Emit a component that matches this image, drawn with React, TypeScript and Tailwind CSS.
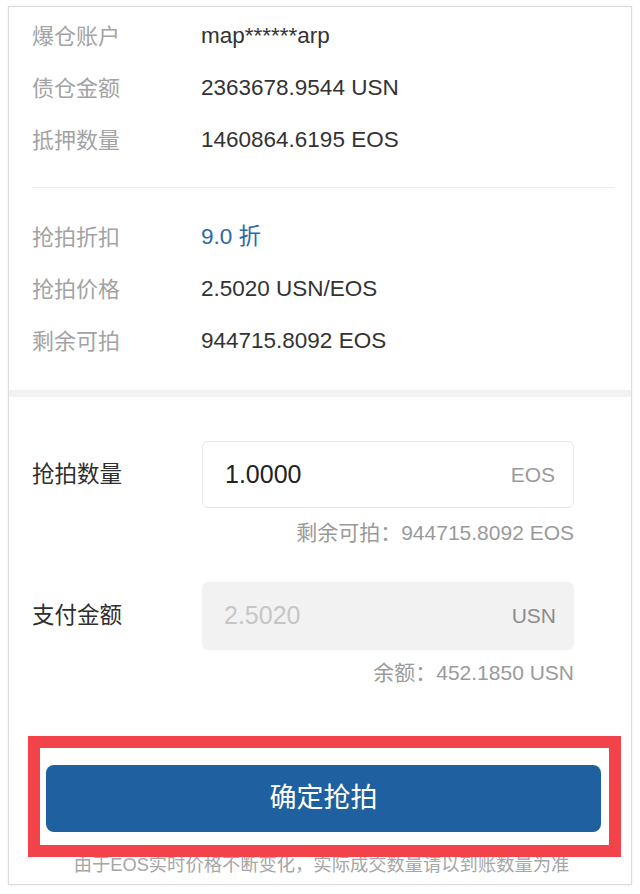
import React from "react";

const font = { fontFamily: '"Liberation Sans", "Noto Sans CJK SC", sans-serif' };

function InfoRow({ label, value, valueClass }: { label: string; value: string; valueClass?: string }) {
  return (
    <div className="flex h-[52px] items-center">
      <div className="w-[169px] text-[22px] text-[#a3a3a3]">{label}</div>
      <div className={"text-[22.5px] " + (valueClass ?? "text-[#333333]")}>{value}</div>
    </div>
  );
}

export default function App() {
  return (
    <div className="relative h-[894px] w-[640px] overflow-hidden bg-white" style={font}>
      <div className="ml-[8px] mt-[6px] w-[624px] border border-[#dcdcdc] bg-white shadow-[0_0_3px_rgba(0,0,0,0.08)]">
        {/* section 1 */}
        <div className="pl-[23px] pt-[3px]">
          <InfoRow label="爆仓账户" value="map******arp" />
          <InfoRow label="债仓金额" value="2363678.9544 USN" />
          <InfoRow label="抵押数量" value="1460864.6195 EOS" />
        </div>
        <div className="ml-[23px] mr-[17px] mt-[21px] h-px bg-[#ececec]" />
        <div className="pl-[23px] pt-[23px]">
          <InfoRow label="抢拍折扣" value="9.0 折" valueClass="text-[#2b68a8]" />
          <InfoRow label="抢拍价格" value="2.5020 USN/EOS" />
          <InfoRow label="剩余可拍" value="944715.8092 EOS" />
        </div>
        <div className="mt-[23px] h-[7px] bg-[#f2f2f2]" />

        {/* section 3 */}
        <div className="pl-[23px] pr-[57px] pt-[44px]">
          <div className="flex items-center">
            <div className="w-[170px] text-[22.5px] text-[#2e2e2e]">抢拍数量</div>
            <div className="flex h-[67px] w-[372px] items-center justify-between rounded-[6px] border border-[#e6e6e6] bg-white pl-[22px] pr-[18px]">
              <span className="text-[25px] text-[#222222]">1.0000</span>
              <span className="text-[21px] text-[#9a9a9a]">EOS</span>
            </div>
          </div>
          <div className="mt-[13px] text-right text-[21px] leading-[24px] text-[#9a9a9a]">剩余可拍：944715.8092 EOS</div>

          <div className="mt-[37px] flex items-center">
            <div className="w-[170px] text-[22.5px] text-[#2e2e2e]">支付金额</div>
            <div className="flex h-[68px] w-[372px] items-center justify-between rounded-[6px] bg-[#f2f2f2] pl-[22px] pr-[18px]">
              <span className="text-[25px] text-[#c6c6c6]">2.5020</span>
              <span className="text-[21px] text-[#8c8c8c]">USN</span>
            </div>
          </div>
          <div className="mt-[11px] text-right text-[21px] leading-[24px] text-[#9a9a9a]">余额：452.1850 USN</div>
        </div>

        <button className="ml-[37px] mt-[80px] flex h-[67px] w-[555px] items-center justify-center rounded-[8px] bg-[#1f61a0] text-[27px] text-white">
          确定抢拍
        </button>
        <div className="ml-[3px] mt-[23px] pb-[9px] text-center text-[18.3px] leading-[20px] text-[#a6a6a6]">
          由于EOS实时价格不断变化，实际成交数量请以到账数量为准
        </div>
      </div>

      <div className="pointer-events-none absolute left-[28px] top-[736px] h-[121px] w-[593px] border-[12px] border-[#f2434b]" />
    </div>
  );
}
